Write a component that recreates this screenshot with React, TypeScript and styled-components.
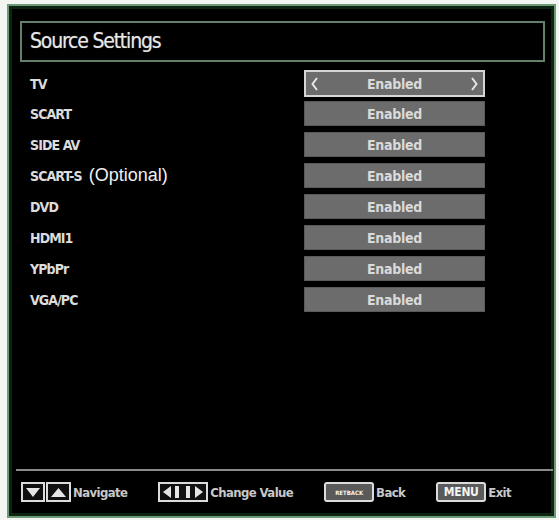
import React from "react";
import styled, { createGlobalStyle } from "styled-components";

const GlobalStyle = createGlobalStyle`
  html, body {
    margin: 0;
    padding: 0;
    background: #f3f5f3;
  }
`;

const sources = ["TV", "SCART", "SIDE AV", "SCART-S", "DVD", "HDMI1", "YPbPr", "VGA/PC"];

const App: React.FC = () => {
  return (
    <>
      <GlobalStyle />
      <Frame>
        <TitleBox>
          <Title>Source Settings</Title>
        </TitleBox>
        <List>
          {sources.map((name, i) => (
            <Row key={name}>
              <Label>
                {name}
                {name === "SCART-S" && <Note>(Optional)</Note>}
              </Label>
              <ValueBox selected={i === 0}>
                {i === 0 && (
                  <Arrow viewBox="0 0 8 14" side="left">
                    <polyline points="6,1 1.5,7 6,13" />
                  </Arrow>
                )}
                Enabled
                {i === 0 && (
                  <Arrow viewBox="0 0 8 14" side="right">
                    <polyline points="2,1 6.5,7 2,13" />
                  </Arrow>
                )}
              </ValueBox>
            </Row>
          ))}
        </List>
        <Separator />
        <Footer>
          <Hint>
            <KeyIcon viewBox="0 0 50 20">
              <rect x="1" y="1" width="22" height="18" />
              <rect x="26" y="1" width="23" height="18" />
              <polygon points="5,6 19,6 12,15" fill="#e6e6e6" stroke="none" />
              <polygon points="30,15 45,15 37.5,6" fill="#e6e6e6" stroke="none" />
            </KeyIcon>
            <HintText>Navigate</HintText>
          </Hint>
          <Hint>
            <KeyIcon viewBox="0 0 50 20">
              <rect x="1" y="1" width="48" height="18" />
              <polygon points="5,10 13,4 13,16" fill="#e6e6e6" stroke="none" />
              <rect x="17" y="4" width="4" height="12" fill="#e6e6e6" stroke="none" />
              <rect x="28" y="4" width="4" height="12" fill="#e6e6e6" stroke="none" />
              <polygon points="45,10 37,4 37,16" fill="#e6e6e6" stroke="none" />
            </KeyIcon>
            <HintText>Change Value</HintText>
          </Hint>
          <Hint>
            <KeyButton small>RETBACK</KeyButton>
            <HintText>Back</HintText>
          </Hint>
          <Hint>
            <KeyButton>MENU</KeyButton>
            <HintText>Exit</HintText>
          </Hint>
        </Footer>
      </Frame>
    </>
  );
};

const condensed = `
  font-family: "DejaVu Sans Condensed", "DejaVu Sans", sans-serif;
  font-stretch: condensed;
`;

const Frame = styled.div`
  box-sizing: border-box;
  width: 549px;
  height: 514px;
  margin: 4px 0 0 7px;
  background: #000;
  border: 2px solid #6f9a76;
  box-shadow: inset 0 0 0 3px #0d2412;
  padding: 15px 1px 14px 11px;
  display: flex;
  flex-direction: column;
`;

const TitleBox = styled.div`
  box-sizing: border-box;
  width: 525px;
  height: 41px;
  border: 2px solid #65806a;
  display: flex;
  align-items: center;
  padding-left: 8px;
`;

const Title = styled.div`
  ${condensed}
  font-size: 21px;
  letter-spacing: -1.2px;
  color: #e6e6e6;
  padding-bottom: 2px;
  text-shadow: 0 0 1px rgba(230, 230, 230, 0.5);
`;

const List = styled.div`
  display: flex;
  flex-direction: column;
  gap: 6px;
  margin-top: 8px;
`;

const Row = styled.div`
  display: grid;
  grid-template-columns: 274px 181px;
  height: 25px;
  align-items: center;
  padding-left: 10px;
`;

const Label = styled.div`
  ${condensed}
  font-weight: bold;
  font-size: 14px;
  letter-spacing: -0.9px;
  color: #dcdcdc;
  display: flex;
  align-items: center;
  white-space: nowrap;
`;

const Note = styled.span`
  font-family: "Liberation Sans", Arial, sans-serif;
  font-weight: normal;
  font-size: 18px;
  letter-spacing: 0;
  color: #f0f0f0;
  margin-left: 7px;
  margin-top: -1px;
`;

const ValueBox = styled.div<{ selected?: boolean }>`
  box-sizing: border-box;
  position: relative;
  height: ${(p) => (p.selected ? "27px" : "25px")};
  background: #6c6c6c;
  border: ${(p) => (p.selected ? "2px solid #d6d6d6" : "1px solid #5a5a5a")};
  display: flex;
  align-items: center;
  justify-content: center;
  ${condensed}
  font-weight: bold;
  font-size: 14px;
  letter-spacing: -0.3px;
  color: #dadada;
`;

const Arrow = styled.svg<{ side: "left" | "right" }>`
  position: absolute;
  top: 5px;
  ${(p) => (p.side === "left" ? "left: 5px;" : "right: 5px;")}
  width: 8px;
  height: 14px;
  fill: none;
  stroke: #e6e6e6;
  stroke-width: 2;
`;

const Separator = styled.div`
  margin-top: auto;
  margin-left: -4px;
  height: 2px;
  background: #8a8a8a;
`;

const Footer = styled.div`
  display: flex;
  align-items: center;
  gap: 31px;
  margin-top: 11px;
  padding-left: 1px;
`;

const Hint = styled.div`
  display: flex;
  align-items: center;
  gap: 2px;
`;

const KeyIcon = styled.svg`
  width: 50px;
  height: 20px;
  fill: #111;
  stroke: #dcdcdc;
  stroke-width: 2;
`;

const KeyButton = styled.div<{ small?: boolean }>`
  box-sizing: border-box;
  width: 50px;
  height: 20px;
  border: 2px solid #dcdcdc;
  border-radius: 3px;
  background: #5a5a5a;
  color: #f4f4f4;
  display: flex;
  align-items: center;
  justify-content: center;
  ${condensed}
  font-weight: bold;
  font-size: ${(p) => (p.small ? "6px" : "12px")};
  letter-spacing: ${(p) => (p.small ? "0" : "-0.3px")};
`;

const HintText = styled.span`
  ${condensed}
  font-weight: bold;
  font-size: 13px;
  letter-spacing: -0.6px;
  color: #c8c8c8;
`;

export default App;
